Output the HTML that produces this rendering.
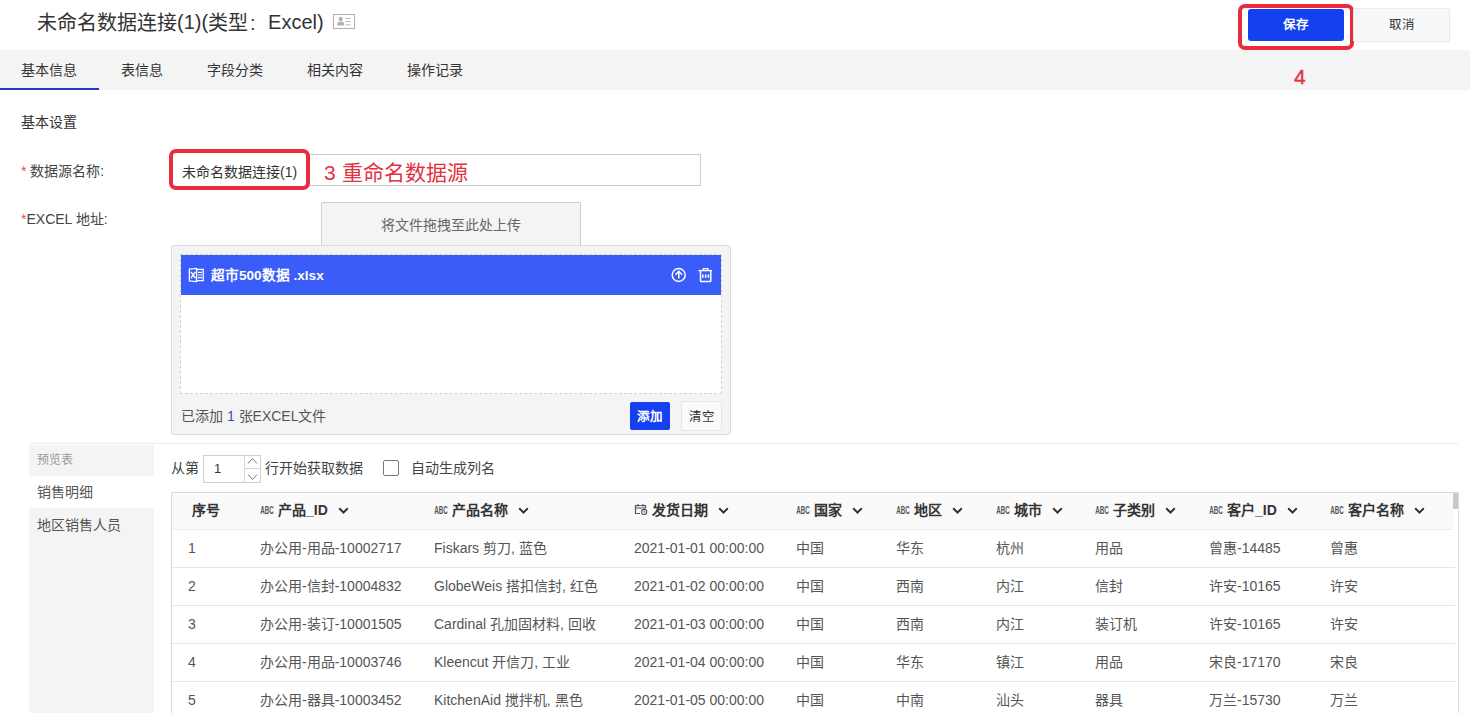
<!DOCTYPE html>
<html lang="zh-CN"><head><meta charset="utf-8">
<style>
*{box-sizing:border-box;margin:0;padding:0}
html,body{width:1470px;height:713px;overflow:hidden;background:#fff}
body{position:relative;font-family:"Liberation Sans",sans-serif;color:#333;font-size:14px}
.a{position:absolute;white-space:nowrap}
.title{left:37px;top:9px;font-size:20px;line-height:28px;color:#333}
.up{position:relative;top:-1px}
.card{left:333px;top:14px;width:22px;height:15px;border:1px solid #aaa}
.btn-save{left:1248px;top:9px;width:96px;height:32px;background:#1440f0;border-radius:3px;color:#fff;font-weight:bold;font-size:12.5px;line-height:32px;text-align:center}
.redbox{border:4px solid #ea2b3d;border-radius:7px}
.btn-cancel{left:1353px;top:8px;width:97px;height:34px;background:#f7f8fa;border:1px solid #ebebeb;border-radius:2px;font-size:12.5px;line-height:32px;text-align:center;color:#333}
.ann{color:#e4303f}
.tabbar{left:0;top:50px;width:1470px;height:40px;background:#f4f4f4}
.tab{top:50px;line-height:40px;font-size:14px;color:#333}
.tabline{left:0;top:88px;width:99px;height:2px;background:#1a3cd0}
.lbl{font-size:14px;color:#444}
.req{color:#e05060}
.input{left:171px;top:154px;width:530px;height:32px;border:1px solid #ccc;background:#fff}
.upl{left:321px;top:202px;width:260px;height:44px;background:#f4f4f4;border:1px solid #cfcfcf;border-bottom:none;border-radius:2px 2px 0 0;text-align:center;line-height:44px;color:#666;font-size:14px}
.panel{left:171px;top:245px;width:560px;height:190px;background:#f4f4f4;border:1px solid #dcdcdc;border-radius:3px}
.drop{left:180px;top:254px;width:542px;height:140px;background:#fff;border:1px dashed #d0d0d0}
.fbar{left:181px;top:255px;width:540px;height:40px;background:#3a5cf8}
.sep{left:29px;top:443px;width:1429px;height:1px;background:#ececec}
.side{left:29px;top:445px;width:125px;height:268px;background:#f4f4f4}
.tbl{left:171px;top:492px;width:1288px;height:230px;border:1px solid #d9d9d9;background:#fff}
.th{top:493px;left:172px;width:1281px;height:37px;background:#fafafa;border-bottom:1px solid #ececec}
.hd{font-weight:bold;font-size:14px;color:#333}
.cell{font-size:14px;color:#555}
.abc{margin-right:4px;vertical-align:1px}
.cal{margin-right:4px;vertical-align:0px}
.chev{margin-left:10px;vertical-align:1px}
.rline{left:172px;width:1283px;height:1px;background:#e6e6e6}
</style></head><body>

<div class="a title">未命名数据连接<span class="up">(1)(</span>类型<span style="display:inline-block;width:20px;padding-left:2px">:</span><span class="up">Excel)</span></div>
<svg class="a" style="left:333px;top:14px" width="22" height="15" viewBox="0 0 22 15"><rect x="0.5" y="0.5" width="21" height="14" fill="#fff" stroke="#b0b0b0" stroke-width="1"/><circle cx="7.7" cy="5" r="2.2" fill="#b5b5b5"/><path d="M4 11.5C4 8.5 5.5 7.6 7.7 7.6S11.4 8.5 11.4 11.5Z" fill="#b5b5b5"/><path d="M12.3 4.4H17.6M12.3 7.6H17.6M13 10.8H17.6" stroke="#b5b5b5" stroke-width="1"/></svg>

<div class="a btn-save">保存</div>
<div class="a redbox" style="left:1238px;top:4px;width:116px;height:46px"></div>
<div class="a btn-cancel">取消</div>

<div class="a tabbar"></div>
<div class="a tab" style="left:21px">基本信息</div>
<div class="a tab" style="left:121px">表信息</div>
<div class="a tab" style="left:207px">字段分类</div>
<div class="a tab" style="left:307px">相关内容</div>
<div class="a tab" style="left:407px">操作记录</div>
<div class="a tabline"></div>
<div class="a ann" style="left:1294px;top:64px;font-size:21px;line-height:26px;-webkit-text-stroke:0.35px #e4303f">4</div>

<div class="a" style="left:21px;top:112px;font-size:14px;line-height:20px">基本设置</div>
<div class="a lbl" style="left:21px;top:161px;line-height:20px"><span class="req">*</span> 数据源名称:</div>
<div class="a lbl" style="left:21px;top:209px;line-height:20px"><span class="req">*</span>EXCEL 地址:</div>

<div class="a input"></div>
<div class="a redbox" style="left:169px;top:149px;width:141px;height:41px;background:#fff"></div>
<div class="a" style="left:182px;top:162px;font-size:14px;line-height:20px;color:#333">未命名数据连接(1)</div>
<div class="a ann" style="left:324px;top:160px;font-size:21px;line-height:26px">3 重命名数据源</div>

<div class="a upl">将文件拖拽至此处上传</div>
<div class="a panel"></div>
<div class="a drop"></div>
<div class="a fbar"></div>
<div class="a" style="left:211px;top:266px;font-size:13.6px;line-height:20px;color:#fff;font-weight:bold">超市500数据 .xlsx</div>
<svg class="a" style="left:186px;top:266px" width="20" height="18" viewBox="0 0 20 18"><g fill="none" stroke="#fff" stroke-width="1.3"><path d="M3.4 3.2L10.6 2.4V15.6L3.4 14.8Z"/><path d="M10.6 3.4H17.2V14.6H10.6"/><path d="M5 5.8L9.4 12.2M9.4 5.8L5 12.2" stroke-width="1.5"/><path d="M12 6.4H16M12 9H16M12 11.6H16" stroke-width="1.2"/></g></svg>
<svg class="a" style="left:670px;top:267px" width="18" height="16" viewBox="0 0 18 16"><g fill="none" stroke="#fff" stroke-width="1.45"><circle cx="8.7" cy="8" r="6.5"/><path d="M8.8 4.6V11.6M5.4 7.8L8.8 4.4L12.2 7.8"/></g></svg>
<svg class="a" style="left:697px;top:267px" width="16" height="16" viewBox="0 0 16 16"><g fill="none" stroke="#fff"><path d="M1.5 3.6H14.9" stroke-width="1.4"/><path d="M6.4 3.2V1.7H10.9V3.2" stroke-width="1.3"/><path d="M3.5 4V13.8Q3.5 14.6 4.3 14.6H13Q13.8 14.6 13.8 13.8V4" stroke-width="1.5"/><path d="M5.9 7.4V10.8M8.65 7.4V10.8M11.4 7.4V10.8" stroke-width="1.5"/></g></svg>
<div class="a" style="left:181px;top:406px;font-size:14px;line-height:20px;color:#555">已添加 <span style="color:#2b4bd8">1</span> 张EXCEL文件</div>
<div class="a" style="left:630px;top:402px;width:40px;height:28px;background:#1440f0;border-radius:2px;color:#fff;font-weight:bold;font-size:12.5px;line-height:30px;text-align:center">添加</div>
<div class="a" style="left:681px;top:401px;width:41px;height:30px;background:#fafafa;border:1px solid #e6e6e6;border-radius:2px;font-size:12.5px;line-height:30px;text-align:center;color:#333">清空</div>

<div class="a sep"></div>
<div class="a side"></div>
<div class="a" style="left:29px;top:476px;width:125px;height:32px;background:#fff"></div>
<div class="a" style="left:37px;top:450px;font-size:12px;line-height:20px;color:#999">预览表</div>
<div class="a" style="left:37px;top:482px;font-size:14px;line-height:20px;color:#555">销售明细</div>
<div class="a" style="left:37px;top:515px;font-size:14px;line-height:20px;color:#555">地区销售人员</div>

<div class="a" style="left:171px;top:458px;font-size:14px;line-height:20px;color:#444">从第</div>
<svg class="a" style="left:203px;top:455px" width="58" height="28" viewBox="0 0 58 28"><rect x="0.5" y="0.5" width="57" height="27" fill="#fff" stroke="#cfcfcf"/><path d="M41.5 1V27M41.5 13.5H57.5" stroke="#d6d6d6" stroke-width="1"/><path d="M45 8.5L49.5 3.5L54 8.5M45 19.5L49.5 24.5L54 19.5" fill="none" stroke="#777" stroke-width="1"/></svg>
<div class="a" style="left:214px;top:459px;font-size:13px;line-height:20px;color:#333">1</div>
<div class="a" style="left:265px;top:458px;font-size:14px;line-height:20px;color:#444">行开始获取数据</div>
<div class="a" style="left:383px;top:460px;width:16px;height:16px;border:1px solid #777;border-radius:2px;background:#fff"></div>
<div class="a" style="left:411px;top:458px;font-size:14px;line-height:20px;color:#444">自动生成列名</div>

<div class="a tbl"></div>
<div class="a th"></div>
<div class="a" style="left:1453px;top:493px;width:5px;height:16px;background:#c9c9c9;border-radius:1px"></div>

<div class="a hd" style="left:192px;top:500px;line-height:20px">序号</div>
<div class="a hd" style="left:260px;top:500px;line-height:20px"><svg class="abc" width="14" height="8" viewBox="0 0 14 8"><text x="0.2" y="7.6" font-size="10.2" font-weight="bold" textLength="13.6" lengthAdjust="spacingAndGlyphs" fill="#555" font-family="Liberation Sans">ABC</text></svg>产品_ID<svg class="chev" width="11" height="7" viewBox="0 0 11 7"><path d="M1.2 1.3 L5.5 5.5 L9.8 1.3" fill="none" stroke="#333" stroke-width="2"/></svg></div>
<div class="a hd" style="left:434px;top:500px;line-height:20px"><svg class="abc" width="14" height="8" viewBox="0 0 14 8"><text x="0.2" y="7.6" font-size="10.2" font-weight="bold" textLength="13.6" lengthAdjust="spacingAndGlyphs" fill="#555" font-family="Liberation Sans">ABC</text></svg>产品名称<svg class="chev" width="11" height="7" viewBox="0 0 11 7"><path d="M1.2 1.3 L5.5 5.5 L9.8 1.3" fill="none" stroke="#333" stroke-width="2"/></svg></div>
<div class="a hd" style="left:634px;top:500px;line-height:20px"><svg class="cal" width="14" height="12" viewBox="0 0 14 12"><path d="M6 10.5H1.5V2.5H11.5V5.5" fill="none" stroke="#555" stroke-width="1.2"/><path d="M1.5 5H11.5M4 1V3.5M9 1V3.5" fill="none" stroke="#555" stroke-width="1.2"/><circle cx="10.2" cy="9" r="2.6" fill="none" stroke="#555" stroke-width="1.1"/><path d="M10.2 7.6V9.2H11.4" fill="none" stroke="#555" stroke-width="0.9"/></svg>发货日期<svg class="chev" width="11" height="7" viewBox="0 0 11 7"><path d="M1.2 1.3 L5.5 5.5 L9.8 1.3" fill="none" stroke="#333" stroke-width="2"/></svg></div>
<div class="a hd" style="left:796px;top:500px;line-height:20px"><svg class="abc" width="14" height="8" viewBox="0 0 14 8"><text x="0.2" y="7.6" font-size="10.2" font-weight="bold" textLength="13.6" lengthAdjust="spacingAndGlyphs" fill="#555" font-family="Liberation Sans">ABC</text></svg>国家<svg class="chev" width="11" height="7" viewBox="0 0 11 7"><path d="M1.2 1.3 L5.5 5.5 L9.8 1.3" fill="none" stroke="#333" stroke-width="2"/></svg></div>
<div class="a hd" style="left:896px;top:500px;line-height:20px"><svg class="abc" width="14" height="8" viewBox="0 0 14 8"><text x="0.2" y="7.6" font-size="10.2" font-weight="bold" textLength="13.6" lengthAdjust="spacingAndGlyphs" fill="#555" font-family="Liberation Sans">ABC</text></svg>地区<svg class="chev" width="11" height="7" viewBox="0 0 11 7"><path d="M1.2 1.3 L5.5 5.5 L9.8 1.3" fill="none" stroke="#333" stroke-width="2"/></svg></div>
<div class="a hd" style="left:996px;top:500px;line-height:20px"><svg class="abc" width="14" height="8" viewBox="0 0 14 8"><text x="0.2" y="7.6" font-size="10.2" font-weight="bold" textLength="13.6" lengthAdjust="spacingAndGlyphs" fill="#555" font-family="Liberation Sans">ABC</text></svg>城市<svg class="chev" width="11" height="7" viewBox="0 0 11 7"><path d="M1.2 1.3 L5.5 5.5 L9.8 1.3" fill="none" stroke="#333" stroke-width="2"/></svg></div>
<div class="a hd" style="left:1095px;top:500px;line-height:20px"><svg class="abc" width="14" height="8" viewBox="0 0 14 8"><text x="0.2" y="7.6" font-size="10.2" font-weight="bold" textLength="13.6" lengthAdjust="spacingAndGlyphs" fill="#555" font-family="Liberation Sans">ABC</text></svg>子类别<svg class="chev" width="11" height="7" viewBox="0 0 11 7"><path d="M1.2 1.3 L5.5 5.5 L9.8 1.3" fill="none" stroke="#333" stroke-width="2"/></svg></div>
<div class="a hd" style="left:1209px;top:500px;line-height:20px"><svg class="abc" width="14" height="8" viewBox="0 0 14 8"><text x="0.2" y="7.6" font-size="10.2" font-weight="bold" textLength="13.6" lengthAdjust="spacingAndGlyphs" fill="#555" font-family="Liberation Sans">ABC</text></svg>客户_ID<svg class="chev" width="11" height="7" viewBox="0 0 11 7"><path d="M1.2 1.3 L5.5 5.5 L9.8 1.3" fill="none" stroke="#333" stroke-width="2"/></svg></div>
<div class="a hd" style="left:1330px;top:500px;line-height:20px"><svg class="abc" width="14" height="8" viewBox="0 0 14 8"><text x="0.2" y="7.6" font-size="10.2" font-weight="bold" textLength="13.6" lengthAdjust="spacingAndGlyphs" fill="#555" font-family="Liberation Sans">ABC</text></svg>客户名称<svg class="chev" width="11" height="7" viewBox="0 0 11 7"><path d="M1.2 1.3 L5.5 5.5 L9.8 1.3" fill="none" stroke="#333" stroke-width="2"/></svg></div>
<div class="a cell" style="left:188px;top:538px;line-height:20px">1</div>
<div class="a cell" style="left:260px;top:538px;line-height:20px">办公用-用品-10002717</div>
<div class="a cell" style="left:434px;top:538px;line-height:20px">Fiskars 剪刀, 蓝色</div>
<div class="a cell" style="left:634px;top:538px;line-height:20px">2021-01-01 00:00:00</div>
<div class="a cell" style="left:796px;top:538px;line-height:20px">中国</div>
<div class="a cell" style="left:896px;top:538px;line-height:20px">华东</div>
<div class="a cell" style="left:996px;top:538px;line-height:20px">杭州</div>
<div class="a cell" style="left:1095px;top:538px;line-height:20px">用品</div>
<div class="a cell" style="left:1209px;top:538px;line-height:20px">曾惠-14485</div>
<div class="a cell" style="left:1330px;top:538px;line-height:20px">曾惠</div>
<div class="a rline" style="top:567px"></div>
<div class="a cell" style="left:188px;top:576px;line-height:20px">2</div>
<div class="a cell" style="left:260px;top:576px;line-height:20px">办公用-信封-10004832</div>
<div class="a cell" style="left:434px;top:576px;line-height:20px">GlobeWeis 搭扣信封, 红色</div>
<div class="a cell" style="left:634px;top:576px;line-height:20px">2021-01-02 00:00:00</div>
<div class="a cell" style="left:796px;top:576px;line-height:20px">中国</div>
<div class="a cell" style="left:896px;top:576px;line-height:20px">西南</div>
<div class="a cell" style="left:996px;top:576px;line-height:20px">内江</div>
<div class="a cell" style="left:1095px;top:576px;line-height:20px">信封</div>
<div class="a cell" style="left:1209px;top:576px;line-height:20px">许安-10165</div>
<div class="a cell" style="left:1330px;top:576px;line-height:20px">许安</div>
<div class="a rline" style="top:605px"></div>
<div class="a cell" style="left:188px;top:614px;line-height:20px">3</div>
<div class="a cell" style="left:260px;top:614px;line-height:20px">办公用-装订-10001505</div>
<div class="a cell" style="left:434px;top:614px;line-height:20px">Cardinal 孔加固材料, 回收</div>
<div class="a cell" style="left:634px;top:614px;line-height:20px">2021-01-03 00:00:00</div>
<div class="a cell" style="left:796px;top:614px;line-height:20px">中国</div>
<div class="a cell" style="left:896px;top:614px;line-height:20px">西南</div>
<div class="a cell" style="left:996px;top:614px;line-height:20px">内江</div>
<div class="a cell" style="left:1095px;top:614px;line-height:20px">装订机</div>
<div class="a cell" style="left:1209px;top:614px;line-height:20px">许安-10165</div>
<div class="a cell" style="left:1330px;top:614px;line-height:20px">许安</div>
<div class="a rline" style="top:643px"></div>
<div class="a cell" style="left:188px;top:652px;line-height:20px">4</div>
<div class="a cell" style="left:260px;top:652px;line-height:20px">办公用-用品-10003746</div>
<div class="a cell" style="left:434px;top:652px;line-height:20px">Kleencut 开信刀, 工业</div>
<div class="a cell" style="left:634px;top:652px;line-height:20px">2021-01-04 00:00:00</div>
<div class="a cell" style="left:796px;top:652px;line-height:20px">中国</div>
<div class="a cell" style="left:896px;top:652px;line-height:20px">华东</div>
<div class="a cell" style="left:996px;top:652px;line-height:20px">镇江</div>
<div class="a cell" style="left:1095px;top:652px;line-height:20px">用品</div>
<div class="a cell" style="left:1209px;top:652px;line-height:20px">宋良-17170</div>
<div class="a cell" style="left:1330px;top:652px;line-height:20px">宋良</div>
<div class="a rline" style="top:681px"></div>
<div class="a cell" style="left:188px;top:690px;line-height:20px">5</div>
<div class="a cell" style="left:260px;top:690px;line-height:20px">办公用-器具-10003452</div>
<div class="a cell" style="left:434px;top:690px;line-height:20px">KitchenAid 搅拌机, 黑色</div>
<div class="a cell" style="left:634px;top:690px;line-height:20px">2021-01-05 00:00:00</div>
<div class="a cell" style="left:796px;top:690px;line-height:20px">中国</div>
<div class="a cell" style="left:896px;top:690px;line-height:20px">中南</div>
<div class="a cell" style="left:996px;top:690px;line-height:20px">汕头</div>
<div class="a cell" style="left:1095px;top:690px;line-height:20px">器具</div>
<div class="a cell" style="left:1209px;top:690px;line-height:20px">万兰-15730</div>
<div class="a cell" style="left:1330px;top:690px;line-height:20px">万兰</div>
<div class="a rline" style="top:719px"></div>
</body></html>
